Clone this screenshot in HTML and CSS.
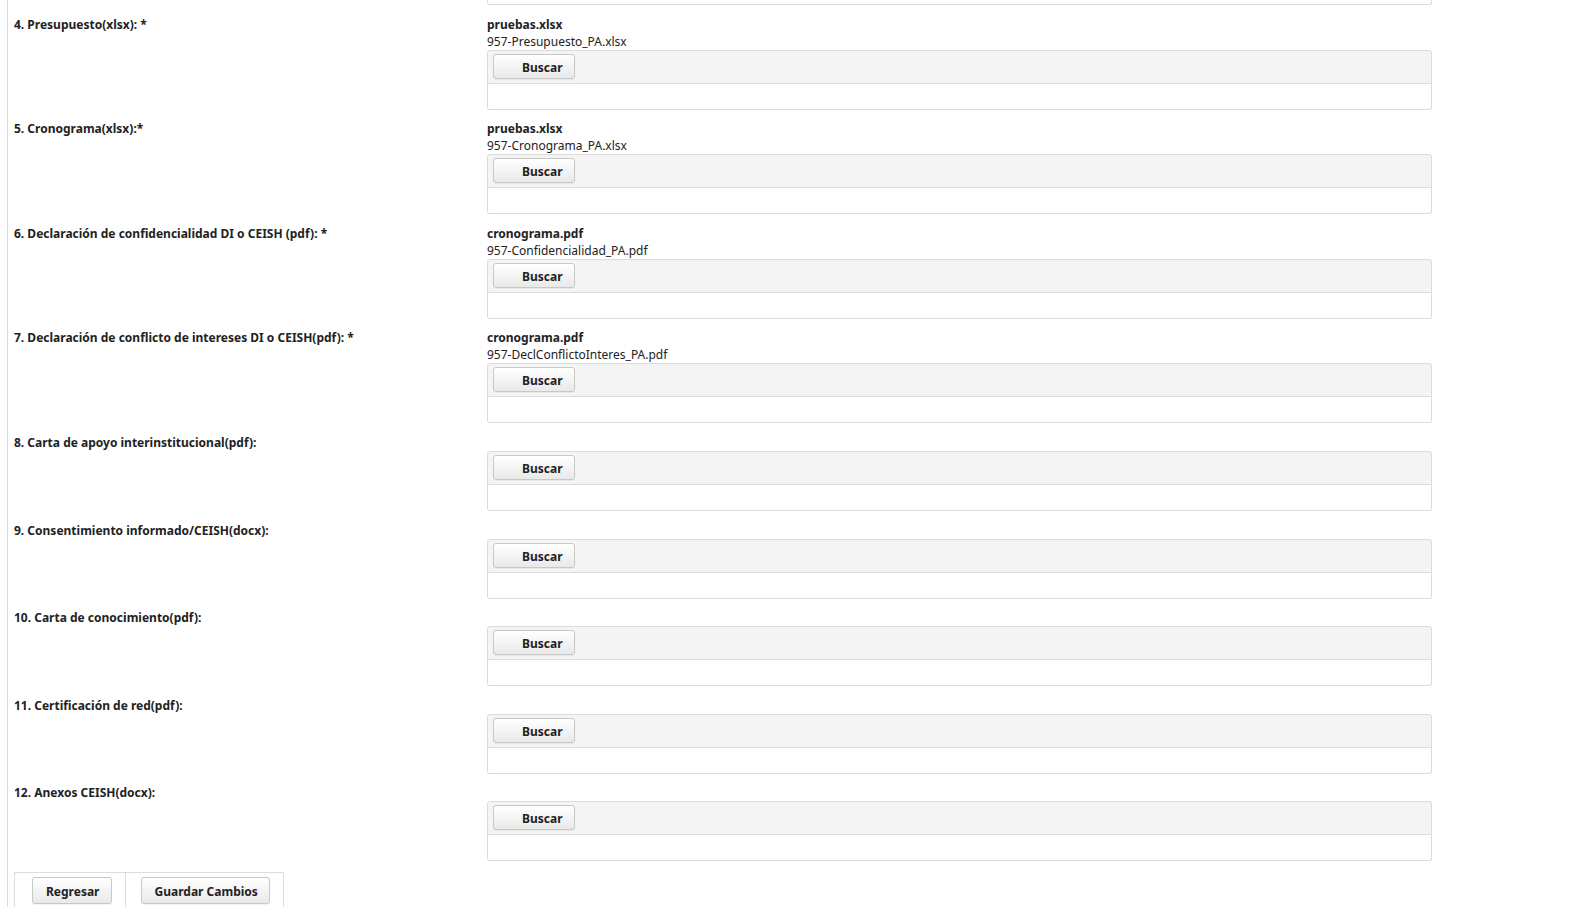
FILE: index.html
```html
<!DOCTYPE html>
<html lang="es">

<head>
    <meta charset="UTF-8">
    <meta name="viewport" content="width=device-width, initial-scale=1.0">
    <title>Documentos del Proyecto</title>
    <link rel="stylesheet" href="styles.css">
</head>

<body>

    <div class="content">
        <form class="doc-form">
            <div class="doc-grid">
                <!-- cola del campo anterior (3) -->
                <div></div>
                <div class="upload-tail"></div>

                <div class="doc-label">4. Presupuesto(xlsx): *</div>
                <div class="doc-value">
                    <div class="file-name">pruebas.xlsx</div>
                    <div class="file-stored">957-Presupuesto_PA.xlsx</div>
                    <div class="fileupload">
                        <div class="fileupload-bar"><button type="button" class="btn btn-icon">Buscar</button></div>
                        <div class="fileupload-content"></div>
                    </div>
                </div>

                <div class="doc-label">5. Cronograma(xlsx):*</div>
                <div class="doc-value">
                    <div class="file-name">pruebas.xlsx</div>
                    <div class="file-stored">957-Cronograma_PA.xlsx</div>
                    <div class="fileupload">
                        <div class="fileupload-bar"><button type="button" class="btn btn-icon">Buscar</button></div>
                        <div class="fileupload-content"></div>
                    </div>
                </div>

                <div class="doc-label">6. Declaración de confidencialidad DI o CEISH (pdf): *</div>
                <div class="doc-value">
                    <div class="file-name">cronograma.pdf</div>
                    <div class="file-stored">957-Confidencialidad_PA.pdf</div>
                    <div class="fileupload">
                        <div class="fileupload-bar"><button type="button" class="btn btn-icon">Buscar</button></div>
                        <div class="fileupload-content"></div>
                    </div>
                </div>

                <div class="doc-label">7. Declaración de conflicto de intereses DI o CEISH(pdf): *</div>
                <div class="doc-value">
                    <div class="file-name">cronograma.pdf</div>
                    <div class="file-stored">957-DeclConflictoInteres_PA.pdf</div>
                    <div class="fileupload">
                        <div class="fileupload-bar"><button type="button" class="btn btn-icon">Buscar</button></div>
                        <div class="fileupload-content"></div>
                    </div>
                </div>

                <div class="doc-label">8. Carta de apoyo interinstitucional(pdf):</div>
                <div class="doc-value">
                    <div class="file-name"></div>
                    <div class="fileupload">
                        <div class="fileupload-bar"><button type="button" class="btn btn-icon">Buscar</button></div>
                        <div class="fileupload-content"></div>
                    </div>
                </div>

                <div class="doc-label">9. Consentimiento informado/CEISH(docx):</div>
                <div class="doc-value">
                    <div class="file-name"></div>
                    <div class="fileupload">
                        <div class="fileupload-bar"><button type="button" class="btn btn-icon">Buscar</button></div>
                        <div class="fileupload-content"></div>
                    </div>
                </div>

                <div class="doc-label">10. Carta de conocimiento(pdf):</div>
                <div class="doc-value">
                    <div class="file-name"></div>
                    <div class="fileupload">
                        <div class="fileupload-bar"><button type="button" class="btn btn-icon">Buscar</button></div>
                        <div class="fileupload-content"></div>
                    </div>
                </div>

                <div class="doc-label">11. Certificación de red(pdf):</div>
                <div class="doc-value">
                    <div class="file-name"></div>
                    <div class="fileupload">
                        <div class="fileupload-bar"><button type="button" class="btn btn-icon">Buscar</button></div>
                        <div class="fileupload-content"></div>
                    </div>
                </div>

                <div class="doc-label">12. Anexos CEISH(docx):</div>
                <div class="doc-value">
                    <div class="file-name"></div>
                    <div class="fileupload">
                        <div class="fileupload-bar"><button type="button" class="btn btn-icon">Buscar</button></div>
                        <div class="fileupload-content"></div>
                    </div>
                </div>
            </div>

            <table class="actions">
                <tr>
                    <td><button type="button" class="btn btn-text">Regresar</button></td>
                    <td><button type="button" class="btn btn-text">Guardar Cambios</button></td>
                </tr>
            </table>
        </form>
    </div>

</body>

</html>
```
FILE: styles.css
```css
body {
    font-family: 'Noto Sans', 'Open Sans', sans-serif;
    font-size: 12px;
    color: #222;
    background-color: #fff;
    margin: 0;
}

.content {
    margin-left: 7px;
    border-left: 1px solid #dcdcdc;
    padding-left: 6px;
    min-height: 100vh;
    box-sizing: border-box;
}

.doc-grid {
    display: grid;
    grid-template-columns: 473px 945px;
    row-gap: 10.6px;
}

.upload-tail {
    height: 5px;
    box-sizing: border-box;
    border: 1px solid #dcdcdc;
    border-top: none;
    border-radius: 0 0 3px 3px;
}

.doc-label {
    font-weight: bold;
    line-height: 17px;
}

.file-name {
    font-weight: bold;
    line-height: 17px;
    height: 17px;
}

.file-stored {
    line-height: 17px;
}

.fileupload-bar {
    background-color: #f4f4f4;
    border: 1px solid #dcdcdc;
    border-radius: 3px 3px 0 0;
    padding: 3px 5px 4px;
    display: flex;
}

.fileupload-content {
    height: 25px;
    border: 1px solid #dcdcdc;
    border-top: none;
    border-radius: 0 0 3px 3px;
    background-color: #fff;
}

.btn {
    font-family: inherit;
    font-size: 12px;
    font-weight: bold;
    color: #222;
    background: linear-gradient(#ffffff, #e9e9e9);
    border: 1px solid #c8c8c8;
    border-radius: 3px;
    box-shadow: 0 1px 1px rgba(0, 0, 0, 0.06);
    cursor: pointer;
    margin: 0;
}

.btn-icon {
    height: 25px;
    padding: 2px 11px 0 28px;
}

.btn-text {
    height: 27px;
    padding: 2px 11px 0 13px;
}

.actions {
    margin-top: 11px;
    border-collapse: collapse;
    border: 1px solid #dcdcdc;
}

.actions td {
    border: 1px solid #dcdcdc;
    padding: 4px 13px 4px 17px;
}

.actions td + td {
    padding-left: 15px;
}
```
